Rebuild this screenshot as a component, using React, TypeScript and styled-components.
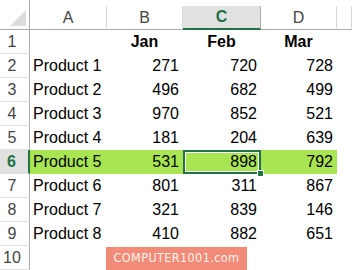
import styled, { createGlobalStyle, css } from 'styled-components';

const GlobalStyle = createGlobalStyle`
  html, body {
    margin: 0;
    padding: 0;
    background: #fff;
  }
  body {
    font-family: 'Liberation Sans', Arial, sans-serif;
    overflow: hidden;
  }
`;

const GREEN = '#217346';
const ROW_FILL = '#a9e552';

const columns = ['A', 'B', 'C', 'D'];
const months = ['Jan', 'Feb', 'Mar'];

const rows: [string, number, number, number][] = [
  ['Product 1', 271, 720, 728],
  ['Product 2', 496, 682, 499],
  ['Product 3', 970, 852, 521],
  ['Product 4', 181, 204, 639],
  ['Product 5', 531, 898, 792],
  ['Product 6', 801, 311, 867],
  ['Product 7', 321, 839, 146],
  ['Product 8', 410, 882, 651],
];

const SELECTED_ROW = 6;
const SELECTED_COL = 'C';

const Sheet = styled.div`
  position: relative;
  display: grid;
  grid-template-columns: 30px 77px 76px 78px 76px 1fr;
  grid-template-rows: 30px repeat(10, 24px);
  width: 352px;
  height: 270px;
  overflow: hidden;
  font-size: 16px;
  color: #000;
`;

const Corner = styled.div`
  position: relative;
  border-right: 1px solid #ababab;
  border-bottom: 1px solid #ababab;
  &::after {
    content: '';
    position: absolute;
    right: 3px;
    bottom: 3px;
    width: 0;
    height: 0;
    border-left: 16px solid transparent;
    border-bottom: 16px solid #dcdcdc;
  }
`;

const ColHead = styled.div<{ $active?: boolean }>`
  display: flex;
  align-items: center;
  justify-content: center;
  margin-top: 6px;
  border-right: 1px solid #dadada;
  border-bottom: 1px solid #ababab;
  color: #444;
  font-size: 16px;
  ${p =>
    p.$active &&
    css`
      background: #e1e1e1;
      color: ${GREEN};
      font-weight: bold;
      border-right-color: #ababab;
      border-bottom: 2px solid ${GREEN};
    `}
`;

const RowHead = styled.div<{ $active?: boolean }>`
  display: flex;
  align-items: center;
  justify-content: center;
  padding-right: 5px;
  border-right: 1px solid #ababab;
  border-bottom: 1px solid #e1e1e1;
  color: #444;
  font-size: 16px;
  ${p =>
    p.$active &&
    css`
      background: #e1e1e1;
      color: ${GREEN};
      font-weight: bold;
      border-right: 2px solid ${GREEN};
    `}
`;

const Cell = styled.div<{ $align?: 'left' | 'center' | 'right'; $bold?: boolean; $fill?: boolean }>`
  display: flex;
  align-items: center;
  justify-content: ${p => (p.$align === 'right' ? 'flex-end' : p.$align === 'center' ? 'center' : 'flex-start')};
  padding: 0 4px 0 3px;
  font-weight: ${p => (p.$bold ? 'bold' : 'normal')};
  background: ${p => (p.$fill ? ROW_FILL : 'transparent')};
  white-space: nowrap;
`;

const Selected = styled(Cell)`
  position: relative;
  box-shadow: inset 0 0 0 2px ${GREEN}, inset 0 0 0 3px #fff;
  &::after {
    content: '';
    position: absolute;
    right: -3px;
    bottom: -3px;
    width: 5px;
    height: 5px;
    background: ${GREEN};
    border: 1px solid #fff;
    z-index: 2;
  }
`;

const Watermark = styled.div`
  position: absolute;
  left: 106px;
  top: 247px;
  width: 141px;
  height: 26px;
  display: flex;
  justify-content: center;
  padding-top: 3px;
  box-sizing: border-box;
  background: #f28b78;
  color: #fff3ef;
  font-family: 'DejaVu Sans Condensed', 'DejaVu Sans', sans-serif;
  font-stretch: condensed;
  font-size: 12.5px;
  letter-spacing: 0.4px;
`;

const App = () => {
  const isSel = (r: number) => r === SELECTED_ROW;

  return (
    <>
      <GlobalStyle />
      <Sheet>
        <Corner />
        {columns.map(c => (
          <ColHead key={c} $active={c === SELECTED_COL}>
            {c}
          </ColHead>
        ))}
        <ColHead />

        <RowHead>1</RowHead>
        <Cell />
        {months.map(m => (
          <Cell key={m} $align="center" $bold>
            {m}
          </Cell>
        ))}
        <Cell />

        {rows.map(([name, b, c, d], i) => {
          const r = i + 2;
          const fill = isSel(r);
          return [
            <RowHead key={`h${r}`} $active={fill}>
              {r}
            </RowHead>,
            <Cell key={`a${r}`} $fill={fill}>
              {name}
            </Cell>,
            <Cell key={`b${r}`} $align="right" $fill={fill}>
              {b}
            </Cell>,
            fill ? (
              <Selected key={`c${r}`} $align="right" $fill>
                {c}
              </Selected>
            ) : (
              <Cell key={`c${r}`} $align="right">
                {c}
              </Cell>
            ),
            <Cell key={`d${r}`} $align="right" $fill={fill}>
              {d}
            </Cell>,
            <Cell key={`e${r}`} />,
          ];
        })}

        <RowHead>10</RowHead>
        <Cell />
        <Cell />
        <Cell />
        <Cell />
        <Cell />

        <Watermark>COMPUTER1001.com</Watermark>
      </Sheet>
    </>
  );
};

export default App;
